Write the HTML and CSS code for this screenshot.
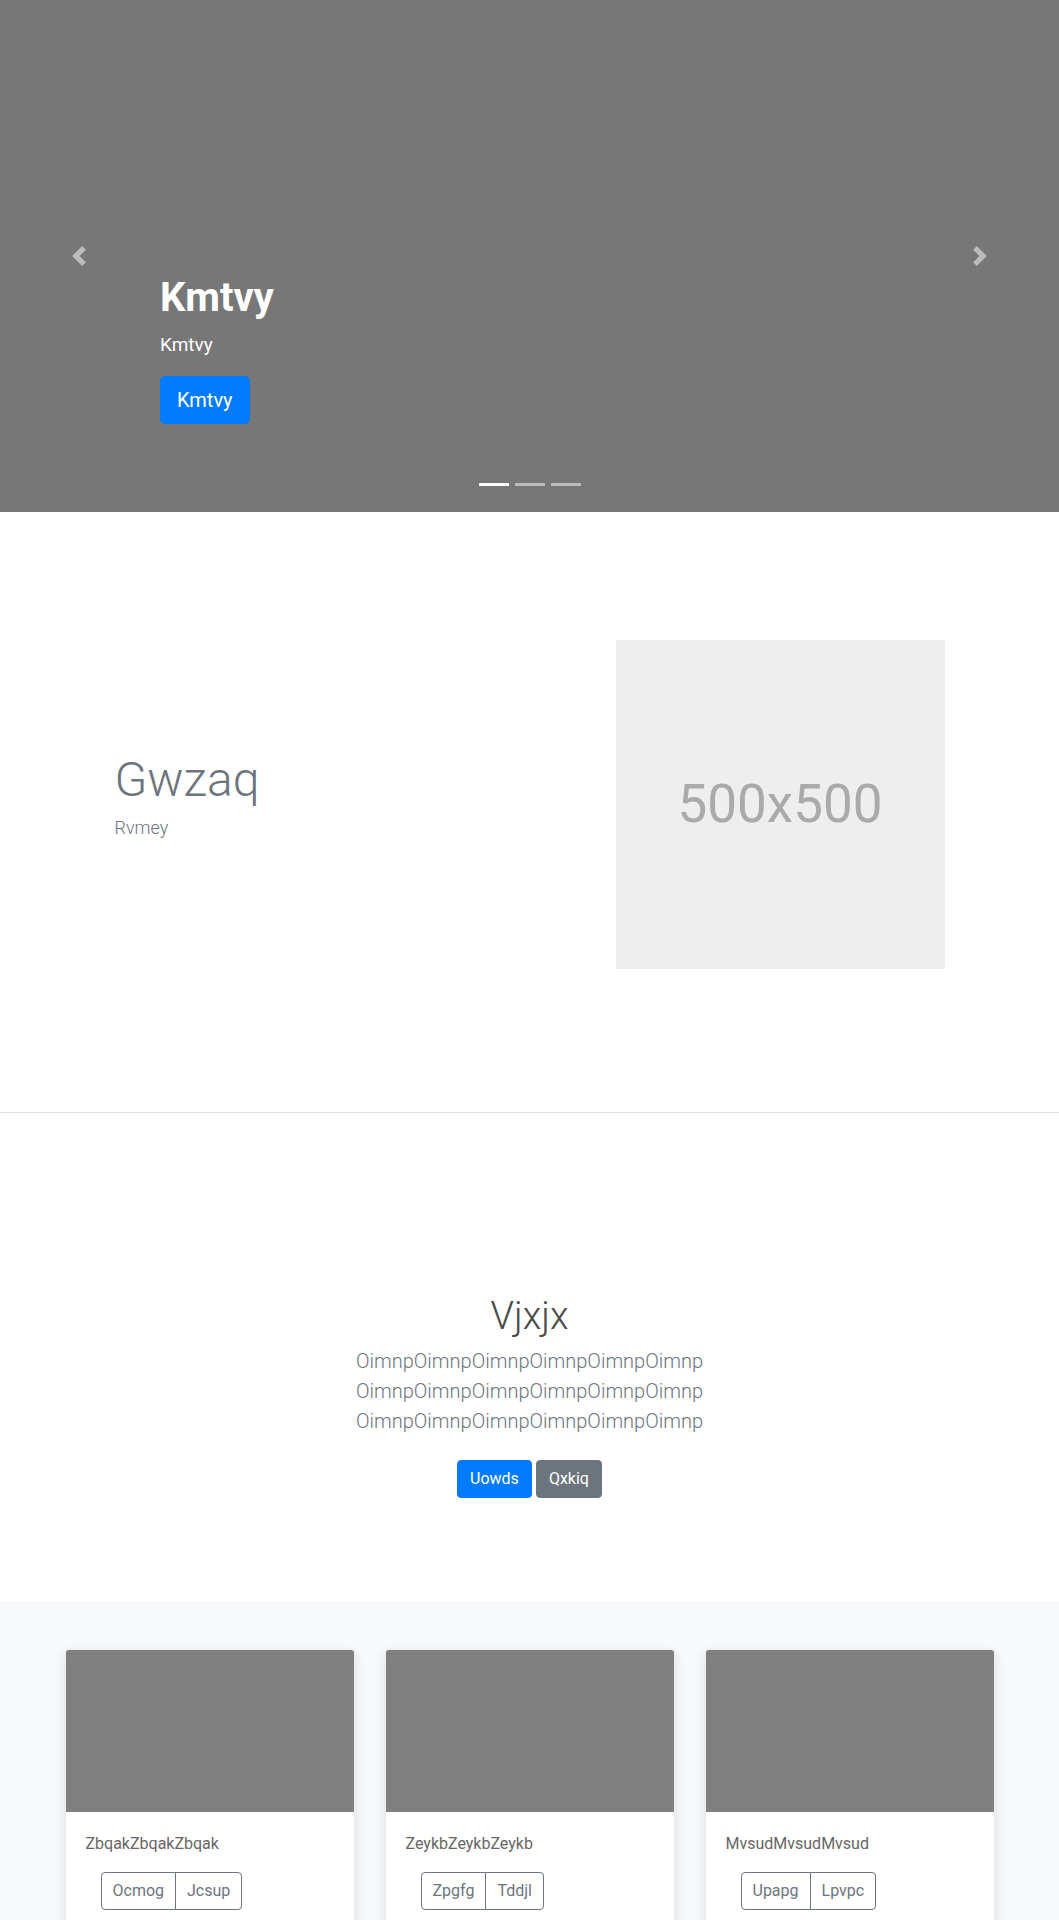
FILE: index.html
```html
<!DOCTYPE html>
<html lang="en">
<head>
<meta charset="utf-8">
<title>Page</title>
<link rel="stylesheet" href="styles.css">
</head>
<body>
<section class="carousel">
  <div class="carousel-item">
    <div class="caption">
      <h1 class="caption-title">Kmtvy</h1>
      <p class="caption-sub">Kmtvy</p>
      <a class="btn btn-lg btn-primary" href="#">Kmtvy</a>
    </div>
  </div>
  <a class="control control-prev" href="#" aria-label="Previous">
    <svg class="control-icon" viewBox="0 0 8 8" width="20" height="20"><path d="M5.25 0l-4 4 4 4 1.5-1.5L4.25 4l2.5-2.5L5.25 0z" fill="#fff"/></svg>
  </a>
  <a class="control control-next" href="#" aria-label="Next">
    <svg class="control-icon" viewBox="0 0 8 8" width="20" height="20"><path d="M2.75 0l-1.5 1.5L3.75 4l-2.5 2.5L2.75 8l4-4-4-4z" fill="#fff"/></svg>
  </a>
  <ol class="indicators">
    <li class="active"></li>
    <li></li>
    <li></li>
  </ol>
</section>

<section class="feature">
  <div class="feature-inner">
    <div class="feature-text">
      <h2 class="feature-title">Gwzaq</h2>
      <p class="feature-sub">Rvmey</p>
    </div>
    <div class="feature-media">
      <div class="placeholder">500x500</div>
    </div>
  </div>
</section>

<section class="jumbotron">
  <div class="jumbo-container">
    <h1 class="jumbo-heading">Vjxjx</h1>
    <p class="lead">OimnpOimnpOimnpOimnpOimnpOimnp OimnpOimnpOimnpOimnpOimnpOimnp OimnpOimnpOimnpOimnpOimnpOimnp</p>
    <p class="jumbo-actions">
      <a class="btn btn-primary" href="#">Uowds</a>
      <a class="btn btn-secondary" href="#">Qxkiq</a>
    </p>
  </div>
</section>

<section class="album">
  <div class="album-grid">
    <div class="card">
      <div class="card-img"></div>
      <div class="card-body">
        <p class="card-text">ZbqakZbqakZbqak</p>
        <div class="btn-group">
          <a class="btn btn-outline" href="#">Ocmog</a>
          <a class="btn btn-outline" href="#">Jcsup</a>
        </div>
      </div>
    </div>
    <div class="card">
      <div class="card-img"></div>
      <div class="card-body">
        <p class="card-text">ZeykbZeykbZeykb</p>
        <div class="btn-group">
          <a class="btn btn-outline" href="#">Zpgfg</a>
          <a class="btn btn-outline" href="#">Tddjl</a>
        </div>
      </div>
    </div>
    <div class="card">
      <div class="card-img"></div>
      <div class="card-body">
        <p class="card-text">MvsudMvsudMvsud</p>
        <div class="btn-group">
          <a class="btn btn-outline" href="#">Upapg</a>
          <a class="btn btn-outline" href="#">Lpvpc</a>
        </div>
      </div>
    </div>
  </div>
</section>
</body>
</html>
```

FILE: styles.css
```css
* { box-sizing: border-box; }

body {
  margin: 0;
  font-family: Roboto, "Liberation Sans", Arial, sans-serif;
  font-size: 16px;
  line-height: 1.5;
  color: #212529;
  background: #fff;
}

a { text-decoration: none; }

/* Buttons */
.btn {
  display: inline-block;
  font-size: 16px;
  font-weight: 400;
  line-height: 1.5;
  padding: 6px 12px;
  border: 1px solid transparent;
  border-radius: 4px;
  text-align: center;
  white-space: nowrap;
}
.btn-lg {
  font-size: 20px;
  padding: 8px 16px;
  border-radius: 5px;
}
.btn-primary { background: #007bff; border-color: #007bff; color: #fff; }
.btn-secondary { background: #6c757d; border-color: #6c757d; color: #fff; }
.btn-outline { background: transparent; border-color: #6c757d; color: #6c757d; }

/* Carousel */
.carousel {
  position: relative;
  height: 512px;
  background: #777;
  overflow: hidden;
}
.carousel-item {
  height: 100%;
  padding: 274px 0 0 160px;
}
.caption { color: #fff; }
.caption-title {
  margin: 0 0 9px;
  font-size: 40px;
  font-weight: 700;
  line-height: 1.2;
}
.caption-sub {
  margin: 0 0 18px;
  font-size: 19px;
  font-weight: 400;
  line-height: 27px;
}
.control {
  position: absolute;
  top: 0;
  bottom: 0;
  width: 15%;
  display: flex;
  align-items: center;
  justify-content: center;
  opacity: 0.5;
}
.control-prev { left: 0; }
.control-next { right: 0; }
.control-icon { display: block; width: 20px; height: 20px; }

.indicators {
  position: absolute;
  left: 0;
  right: 0;
  bottom: 0;
  margin: 0 0 16px;
  padding: 0;
  list-style: none;
  display: flex;
  justify-content: center;
}
.indicators li {
  width: 30px;
  height: 3px;
  margin: 0 3px;
  box-sizing: content-box;
  border-top: 10px solid transparent;
  border-bottom: 10px solid transparent;
  background: #fff;
  background-clip: padding-box;
  opacity: 0.5;
}
.indicators li.active { opacity: 1; }

/* Feature */
.feature {
  padding: 128px 0 143px;
  border-bottom: 1px solid #e0e0e0;
}
.feature-inner {
  width: 960px;
  margin: 0 auto;
  display: grid;
  grid-template-columns: 1fr 1fr;
  align-items: start;
}
.feature-text {
  padding-left: 65px;
  margin-top: 111px;
}
.feature-title {
  margin: 0 0 5px;
  font-size: 48px;
  font-weight: 300;
  line-height: 1.2;
  color: #6c757d;
}
.feature-sub {
  margin: 0;
  font-size: 18px;
  font-weight: 300;
  line-height: 1.5;
  color: #6c757d;
}
.feature-media { padding-left: 86px; }
.placeholder {
  width: 329px;
  height: 329px;
  background: #eee;
  color: #aaa;
  font-size: 53px;
  display: flex;
  align-items: center;
  justify-content: center;
}

/* Jumbotron */
.jumbotron {
  padding: 180px 0 95px;
  text-align: center;
}
.jumbo-container {
  max-width: 640px;
  margin: 0 auto;
  padding: 0 15px;
}
.jumbo-heading {
  margin: 0 0 6px;
  font-size: 38px;
  font-weight: 300;
  line-height: 47px;
  color: #4a4a4a;
}
.lead {
  margin: 0 0 16px;
  font-size: 20px;
  font-weight: 300;
  line-height: 1.5;
  color: #6c757d;
}
.jumbo-actions {
  margin: 0;
  display: flex;
  justify-content: center;
  gap: 4px;
}
.jumbo-actions .btn { margin: 8px 0; }

/* Album */
.album {
  background: #f8f9fa;
  padding: 48px 0 48px;
}
.album-grid {
  width: 930px;
  margin: 0 auto;
  display: grid;
  grid-template-columns: repeat(3, 1fr);
  gap: 30px;
}
.card {
  background: #fff;
  border: 1px solid rgba(0, 0, 0, 0.08);
  border-radius: 4px;
  overflow: hidden;
  box-shadow: 0 4px 12px rgba(0, 0, 0, 0.1);
}
.card-img {
  height: 162px;
  background: #808080;
}
.card-body { padding: 20px; }
.card-text {
  margin: 0 0 16px;
  color: #666;
}
.btn-group {
  display: inline-flex;
  margin-left: 15px;
}
.btn-group .btn {
  padding-left: 11px;
  padding-right: 11px;
}
.btn-group .btn:first-child {
  border-top-right-radius: 0;
  border-bottom-right-radius: 0;
}
.btn-group .btn + .btn {
  margin-left: -1px;
  border-top-left-radius: 0;
  border-bottom-left-radius: 0;
}
```
